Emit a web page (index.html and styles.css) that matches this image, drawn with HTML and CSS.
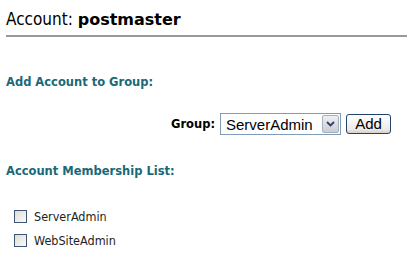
FILE: index.html
```html
<!DOCTYPE html>
<html>
<head>
<meta charset="utf-8">
<link rel="stylesheet" href="styles.css">
</head>
<body>
<div class="page">
  <h1 class="title"><span class="title-key">Account:</span> <b>postmaster</b></h1>
  <h2 class="section">Add Account to Group:</h2>
  <div class="group-row">
    <span class="group-label">Group:</span>
    <div class="select">
      <span class="select-text">ServerAdmin</span>
      <span class="select-btn">
        <svg width="9" height="6" viewBox="0 0 9 6"><path d="M1 1 L4.5 4.5 L8 1" fill="none" stroke="#33405a" stroke-width="1.8"/></svg>
      </span>
    </div>
    <button class="add-btn">Add</button>
  </div>
  <h2 class="section section-list">Account Membership List:</h2>
  <ul class="members">
    <li><span class="cb"></span>ServerAdmin</li>
    <li><span class="cb"></span>WebSiteAdmin</li>
  </ul>
</div>
</body>
</html>
```
FILE: styles.css
```css
html, body { margin: 0; padding: 0; background: #fff; }
.page { padding: 0 0 0 6px; font-family: "DejaVu Sans", Verdana, sans-serif; }
.title {
  margin: 0;
  padding: 9px 0 0 0;
  height: 26px;
  font-family: "DejaVu Sans Condensed", "DejaVu Sans", sans-serif;
  font-size: 17px;
  font-weight: normal;
  color: #000;
  line-height: 20px;
  border-bottom: 2px solid #999;
}
.title b { font-family: "DejaVu Sans", sans-serif; font-weight: bold; font-size: 16px; }
.section {
  margin: 0;
  font-size: 11.5px;
  font-weight: bold;
  color: #1a6878;
  line-height: 14px;
}
.title + .section { margin-top: 38px; }
.group-row {
  display: flex;
  align-items: center;
  justify-content: flex-end;
  padding-right: 16px;
  margin-top: 24px;
  height: 22px;
}
.group-label { font-size: 11.5px; font-weight: bold; color: #000; margin-right: 5px; }
.select {
  width: 119px;
  height: 20px;
  border: 1px solid #7f9db9;
  display: flex;
  align-items: center;
  justify-content: space-between;
  font-family: "Liberation Sans", Arial, sans-serif;
  font-size: 15px;
  color: #000;
  background: #fff;
}
.select-text { padding-left: 5px; }
.select-btn {
  width: 17px; height: 18px;
  margin-right: 1px;
  border: 1px solid #a9b0bd;
  border-radius: 2px;
  background: linear-gradient(#eef0f4, #c8ccd6);
  display: flex; align-items: center; justify-content: center;
  box-sizing: border-box;
}
.add-btn {
  margin-left: 5px;
  width: 45px;
  height: 20px;
  padding: 0;
  border: 1px solid #24436c;
  border-radius: 3px;
  background: linear-gradient(#ffffff, #ecebe6 80%, #d6d0c5);
  font-family: "Liberation Sans", Arial, sans-serif;
  font-size: 15px;
  line-height: 18px;
  color: #000;
}
.section-list { margin-top: 29px; }
.members { list-style: none; margin: 26px 0 0 8px; padding: 0; }
.members li {
  display: flex;
  align-items: center;
  height: 24px;
  font-family: "DejaVu Sans Condensed", "DejaVu Sans", sans-serif;
  font-size: 12.5px;
  color: #1e1e1e;
}
.cb {
  width: 11px; height: 11px;
  border: 1px solid #3f5573;
  background: linear-gradient(135deg, #dcdcd7, #fbfbf9);
  margin-right: 7px;
}
```
